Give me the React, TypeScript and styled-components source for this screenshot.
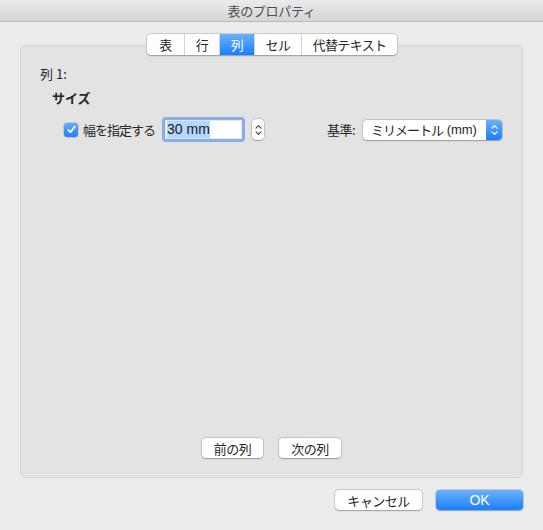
import { FC, useState } from "react"
import styled, { createGlobalStyle } from "styled-components"

const GlobalStyle = createGlobalStyle`
  html, body {
    margin: 0;
    padding: 0;
    background: #ececec;
  }
  body {
    font-family: "Noto Sans CJK JP", "Liberation Sans", sans-serif;
    font-size: 13px;
    color: #262626;
    -webkit-font-smoothing: antialiased;
  }
  * { box-sizing: border-box; }
`

const tabs = ["表", "行", "列", "セル", "代替テキスト"]
const tabWidths = [37, 35, 35, 47, 96]

const Chevrons: FC<{ color: string }> = ({ color }) => (
  <svg width="7" height="12" viewBox="0 0 7 12">
    <path d="M1 4.2 L3.5 1.7 L6 4.2" fill="none" stroke={color} strokeWidth="1.2" strokeLinecap="round" strokeLinejoin="round" />
    <path d="M1 7.8 L3.5 10.3 L6 7.8" fill="none" stroke={color} strokeWidth="1.2" strokeLinecap="round" strokeLinejoin="round" />
  </svg>
)

const App: FC = () => {
  const [active, setActive] = useState(2)
  const [fixed, setFixed] = useState(true)

  return (
    <Window>
      <GlobalStyle />
      <TitleBar>表のプロパティ</TitleBar>
      <Body>
        <Tabs>
          {tabs.map((t, i) => (
            <Tab key={t} $active={i === active} $w={tabWidths[i]} $first={i === 0} onClick={() => setActive(i)}>
              {t}
            </Tab>
          ))}
        </Tabs>
        <Panel>
          <ColumnLabel>列 1:</ColumnLabel>
          <SectionTitle>サイズ</SectionTitle>
          <SizeRow>
            <CheckLabel onClick={() => setFixed(!fixed)}>
              <CheckBox $checked={fixed}>
                {fixed && (
                  <svg width="11" height="11" viewBox="0 0 11 11">
                    <path d="M2.2 5.8 L4.4 8.2 L8.8 2.6" fill="none" stroke="#fff" strokeWidth="1.8" strokeLinecap="round" strokeLinejoin="round" />
                  </svg>
                )}
              </CheckBox>
              <span>幅を指定する</span>
            </CheckLabel>
            <FieldRing>
              <Field>
                <Selected>30 mm</Selected>
              </Field>
            </FieldRing>
            <Stepper>
              <Chevrons color="#4a4a4a" />
            </Stepper>
            <Spacer />
            <BaseLabel>基準:</BaseLabel>
            <Popup>
              <PopupText>
                ミリメートル<Latin> (mm)</Latin>
              </PopupText>
              <PopupArrow>
                <Chevrons color="#fff" />
              </PopupArrow>
            </Popup>
          </SizeRow>
          <Grow />
          <NavRow>
            <Button $w={61}>前の列</Button>
            <Button $w={62}>次の列</Button>
          </NavRow>
        </Panel>
        <Footer>
          <Button $w={87}>キャンセル</Button>
          <DefaultButton>OK</DefaultButton>
        </Footer>
      </Body>
    </Window>
  )
}

export default App

//Styled Components

const Window = styled.div`
  width: 543px;
  height: 530px;
  background: #ececec;
  display: flex;
  flex-direction: column;
  overflow: hidden;
`
const TitleBar = styled.div`
  height: 22px;
  flex-shrink: 0;
  display: flex;
  align-items: center;
  justify-content: center;
  background: linear-gradient(#ebebeb, #d5d5d5);
  border-bottom: 1px solid #b8b8b8;
  color: #4d4d4d;
  font-size: 13px;
  letter-spacing: -0.3px;
`
const Body = styled.div`
  flex: 1;
  display: flex;
  flex-direction: column;
  padding: 12px 20px 21px 20px;
`
const Tabs = styled.div`
  align-self: center;
  margin-left: 1px;
  display: flex;
  height: 21px;
  background: #fff;
  border-radius: 4px;
  box-shadow: 0 0 0 0.5px rgba(0, 0, 0, 0.18), 0 0.5px 1.5px rgba(0, 0, 0, 0.25);
  position: relative;
  z-index: 1;
  overflow: hidden;
`
const Tab = styled.div<{ $active: boolean; $w: number; $first: boolean }>`
  width: ${(p) => p.$w}px;
  display: flex;
  align-items: center;
  justify-content: center;
  font-size: 13px;
  letter-spacing: -0.6px;
  cursor: default;
  color: ${(p) => (p.$active ? "#fff" : "#262626")};
  background: ${(p) => (p.$active ? "linear-gradient(#6bb0fb, #1a7ffb)" : "transparent")};
  border-left: ${(p) => (p.$first ? "none" : "1px solid #d4d4d4")};
`
const Panel = styled.div`
  margin-top: -10px;
  height: 433px;
  background: #e3e3e3;
  border: 1px solid #d6d6d6;
  border-radius: 5px;
  display: flex;
  flex-direction: column;
  padding: 18px 19px 19px 19px;
`
const ColumnLabel = styled.div`
  line-height: 20px;
`
const SectionTitle = styled.div`
  margin: 4px 0 0 12px;
  font-weight: bold;
  line-height: 20px;
`
const SizeRow = styled.div`
  display: flex;
  align-items: center;
  margin: 9px 0 0 24px;
  height: 25px;
`
const CheckLabel = styled.label`
  display: flex;
  align-items: center;
  gap: 5px;
  letter-spacing: -1px;
  cursor: default;
`
const CheckBox = styled.span<{ $checked: boolean }>`
  width: 14px;
  height: 14px;
  border-radius: 3px;
  display: flex;
  align-items: center;
  justify-content: center;
  background: ${(p) => (p.$checked ? "linear-gradient(#64acfb, #1c80fb)" : "#fff")};
  box-shadow: 0 0 0 0.5px rgba(0, 0, 0, 0.25);
`
const FieldRing = styled.div`
  margin-left: 7px;
  padding: 3px;
  border-radius: 4px;
  background: #88aee9;
`
const Field = styled.div`
  width: 77px;
  height: 19px;
  background: #fff;
  display: flex;
  align-items: center;
  padding-left: 2px;
  font-size: 14px;
  box-shadow: inset 0 0 0 0.5px rgba(0, 0, 0, 0.2);
`
const Selected = styled.span`
  background: #b3d7ff;
  color: #1a1a1a;
  line-height: 17px;
  font-family: "Liberation Sans", "Noto Sans CJK JP", sans-serif;
`
const Stepper = styled.div`
  margin-left: 7px;
  width: 12px;
  height: 21px;
  background: #fff;
  border-radius: 4px;
  box-shadow: 0 0 0 0.5px rgba(0, 0, 0, 0.25), 0 0.5px 1px rgba(0, 0, 0, 0.2);
  display: flex;
  align-items: center;
  justify-content: center;
`
const Spacer = styled.div`
  flex: 1;
`
const BaseLabel = styled.div`
  margin-right: 8px;
  letter-spacing: -0.5px;
`
const Popup = styled.div`
  width: 139px;
  height: 20px;
  margin-right: 1px;
  display: flex;
  background: #fff;
  border-radius: 4px;
  box-shadow: 0 0 0 0.5px rgba(0, 0, 0, 0.2), 0 0.5px 1.5px rgba(0, 0, 0, 0.25);
  overflow: hidden;
`
const PopupText = styled.div`
  flex: 1;
  display: flex;
  align-items: center;
  padding-left: 8px;
  font-size: 13px;
  letter-spacing: -1px;
  white-space: pre;
`
const Latin = styled.span`
  font-family: "Liberation Sans", sans-serif;
  letter-spacing: 0;
`
const PopupArrow = styled.div`
  width: 16px;
  flex-shrink: 0;
  background: linear-gradient(#6bb0fb, #1a7ffb);
  display: flex;
  align-items: center;
  justify-content: center;
`
const Grow = styled.div`
  flex: 1;
`
const NavRow = styled.div`
  display: flex;
  justify-content: center;
  gap: 16px;
`
const Button = styled.button<{ $w: number }>`
  width: ${(p) => p.$w}px;
  height: 20px;
  padding: 0;
  border: none;
  border-radius: 4px;
  background: #fff;
  font-family: inherit;
  font-size: 13px;
  letter-spacing: -0.5px;
  color: #262626;
  box-shadow: 0 0 0 0.5px rgba(0, 0, 0, 0.2), 0 0.5px 1.5px rgba(0, 0, 0, 0.25);
`
const Footer = styled.div`
  margin-top: 12px;
  display: flex;
  justify-content: flex-end;
  gap: 14px;
`
const DefaultButton = styled.button`
  width: 87px;
  height: 20px;
  padding: 0;
  border: none;
  border-radius: 4px;
  background: linear-gradient(#6cb1fb, #1a7ffb);
  color: #fff;
  font-family: "Liberation Sans", sans-serif;
  font-size: 14px;
  box-shadow: 0 0 0 0.5px rgba(0, 60, 180, 0.3), 0 0.5px 1.5px rgba(0, 0, 0, 0.25);
`
